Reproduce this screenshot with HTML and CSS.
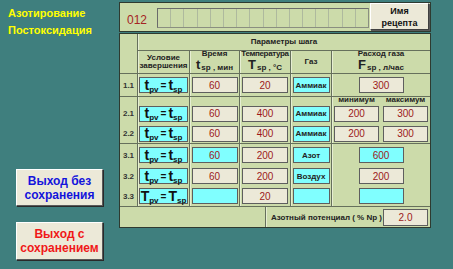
FILE: index.html
```html
<!DOCTYPE html>
<html lang="ru">
<head>
    <meta charset="UTF-8">
    <title>Параметры шага</title>
    <link rel="stylesheet" href="styles.css">
</head>
<body>
<div class="screen">
    <div class="side">
        <div class="mode">Азотирование</div>
        <div class="mode">Постоксидация</div>
        <div class="exits">
            <button class="exit exit-nosave">Выход без<br>сохранения</button>
            <button class="exit exit-save">Выход с<br>сохранением</button>
        </div>
    </div>

    <div class="main">
        <div class="recipe-bar">
            <span class="recipe-no">012</span>
            <div class="recipe-name">
                <span></span><span></span><span></span><span></span>
                <span></span><span></span><span></span><span></span>
                <span></span><span></span><span></span><span></span>
                <span></span><span></span><span></span><span></span>
            </div>
            <button class="name-btn">Имя<br>рецепта</button>
        </div>

        <div class="steps">
            <div class="grid">
                <!-- шапка -->
                <div class="cell first end head-num"></div>
                <div class="cell end wide-all title">Параметры шага</div>

                <div class="cell end hd">Условие<br>завершения</div>
                <div class="cell end hd">Время<span class="sym">t<small>sp , мин</small></span></div>
                <div class="cell end hd"><span class="tight">Температура</span><span class="sym">T<small>sp , °C</small></span></div>
                <div class="cell end hd">Газ</div>
                <div class="cell end hd wide">Расход газа<span class="sym">F<small>sp , л/час</small></span></div>

                <!-- 1.1 -->
                <div class="cell first end num">1.1</div>
                <div class="cell end"><div class="fld cyan cond"><span class="eq">t<sub>pv</sub><i>=</i>t<sub>sp</sub></span></div></div>
                <div class="cell end"><div class="fld">60</div></div>
                <div class="cell end"><div class="fld">20</div></div>
                <div class="cell end"><div class="fld cyan gas">Аммиак</div></div>
                <div class="cell end wide"><div class="fld flow">300</div></div>

                <!-- 2.x -->
                <div class="cell first"></div>
                <div class="cell"></div>
                <div class="cell"></div>
                <div class="cell"></div>
                <div class="cell"></div>
                <div class="cell mm">минимум</div>
                <div class="cell nol mm">максимум</div>

                <div class="cell first num">2.1</div>
                <div class="cell"><div class="fld cyan cond"><span class="eq">t<sub>pv</sub><i>=</i>t<sub>sp</sub></span></div></div>
                <div class="cell"><div class="fld">60</div></div>
                <div class="cell"><div class="fld">400</div></div>
                <div class="cell"><div class="fld cyan gas">Аммиак</div></div>
                <div class="cell"><div class="fld flow">200</div></div>
                <div class="cell nol"><div class="fld flow">300</div></div>

                <div class="cell first end num">2.2</div>
                <div class="cell end"><div class="fld cyan cond"><span class="eq">t<sub>pv</sub><i>=</i>t<sub>sp</sub></span></div></div>
                <div class="cell end"><div class="fld">60</div></div>
                <div class="cell end"><div class="fld">400</div></div>
                <div class="cell end"><div class="fld cyan gas">Аммиак</div></div>
                <div class="cell end"><div class="fld flow">200</div></div>
                <div class="cell end nol"><div class="fld flow">300</div></div>

                <!-- 3.x -->
                <div class="cell first num">3.1</div>
                <div class="cell"><div class="fld cyan cond"><span class="eq">t<sub>pv</sub><i>=</i>t<sub>sp</sub></span></div></div>
                <div class="cell"><div class="fld cyan">60</div></div>
                <div class="cell"><div class="fld">200</div></div>
                <div class="cell"><div class="fld cyan gas">Азот</div></div>
                <div class="cell wide"><div class="fld cyan flow">600</div></div>

                <div class="cell first num">3.2</div>
                <div class="cell"><div class="fld cyan cond"><span class="eq">t<sub>pv</sub><i>=</i>t<sub>sp</sub></span></div></div>
                <div class="cell"><div class="fld">60</div></div>
                <div class="cell"><div class="fld">200</div></div>
                <div class="cell"><div class="fld cyan gas">Воздух</div></div>
                <div class="cell wide"><div class="fld flow">200</div></div>

                <div class="cell first end num">3.3</div>
                <div class="cell end"><div class="fld cyan cond"><span class="eq">T<sub>pv</sub><i>=</i>T<sub>sp</sub></span></div></div>
                <div class="cell end"><div class="fld cyan"></div></div>
                <div class="cell end"><div class="fld">20</div></div>
                <div class="cell end"><div class="fld cyan gas"></div></div>
                <div class="cell end wide"><div class="fld cyan flow"></div></div>
            </div>

            <div class="potential">
                <div class="pot-blank"></div>
                <div class="pot-main">
                    <span class="pot-label">Азотный потенциал ( % Np )</span>
                    <div class="fld flow pot-val">2.0</div>
                </div>
            </div>
        </div>
    </div>
</div>
</body>
</html>
```

FILE: styles.css
```css
body {
    margin: 0;
    background-color: #3f7f7e;
    font-family: "Liberation Sans", Arial, sans-serif;
}
.screen {
    display: grid;
    grid-template-columns: 119px 312px;
    width: 453px;
    height: 269px;
}

/* левая колонка */
.side {
    padding: 5px 0 0 8px;
}
.mode {
    color: #ffff00;
    font-weight: bold;
    font-size: 11px;
    line-height: 17px;
}
.exits {
    margin: 130px 0 0 8px;
}
.exit {
    display: block;
    width: 87px;
    height: 37px;
    padding: 0;
    background-color: #ece9d8;
    border: 1px solid;
    border-color: #ffffff #5a5a5a #5a5a5a #ffffff;
    box-shadow: 1px 1px 0 #2a2a2a;
    font-family: "Liberation Sans", Arial, sans-serif;
    font-weight: bold;
    font-size: 12px;
    line-height: 14px;
}
.exit-nosave { color: #1414dc; }
.exit-save { color: #f01818; margin-top: 16px; height: 38px; }

/* правая часть */
.main {
    padding-top: 2px;
}
.recipe-bar {
    display: flex;
    align-items: flex-start;
    height: 30px;
    box-sizing: border-box;
    background-color: #ccdbaa;
    border: 1px solid #2e3a30;
}
.recipe-no {
    width: 30px;
    margin: 10px 0 0 7px;
    color: #a52424;
    font-size: 12px;
    line-height: 14px;
}
.recipe-name {
    display: flex;
    width: 212px;
    height: 20px;
    margin-top: 5px;
    box-sizing: border-box;
    border: 1px solid;
    border-color: #6b6b6b #8a8f80 #8a8f80 #6b6b6b;
}
.recipe-name span {
    flex: 1;
    border-right: 1px solid #aeb99e;
}
.recipe-name span:last-child {
    border-right: none;
}
.name-btn {
    width: 59px;
    height: 27px;
    margin: 0 0 0 1px;
    padding: 0;
    background-color: #ece9d8;
    border: 1px solid;
    border-color: #ffffff #404040 #404040 #ffffff;
    box-shadow: 1px 1px 0 #5a5a5a;
    font-family: "Liberation Sans", Arial, sans-serif;
    font-weight: bold;
    font-size: 9px;
    line-height: 12px;
    color: #111;
}

.steps {
    margin-top: 1px;
    height: 195px;
    box-sizing: border-box;
    background-color: #ccdbaa;
    border: 1px solid #2e3a30;
}
.grid {
    display: grid;
    grid-template-columns: 17px 52px 50px 51px 41px 50px 49px;
    grid-template-rows: 17px 23px 23px 6px 21px 20px 22px 20px 21px;
}
.cell {
    display: flex;
    align-items: center;
    justify-content: center;
    box-sizing: border-box;
    border-left: 1px solid #66705c;
    box-shadow: inset 1px 0 0 #e6eed2;
    font-size: 8px;
    font-weight: bold;
    color: #222;
}
.cell.first, .cell.nol {
    border-left: none;
    box-shadow: none;
}
.cell.end { border-bottom: 1px solid #66705c; }
.head-num { grid-row: span 2; }
.wide-all { grid-column: span 6; }
.wide { grid-column: span 2; }

.title { line-height: 10px; }
.hd {
    flex-direction: column;
    text-align: center;
    line-height: 8px;
}
.tight {
    white-space: nowrap;
    letter-spacing: -0.35px;
}
.sym {
    font-size: 13px;
    line-height: 12px;
    margin-top: 1px;
    white-space: nowrap;
}
.sym small {
    font-size: 8px;
    margin-left: 1px;
    vertical-align: -1px;
}
.num { color: #333; }
.mm {
    line-height: 6px;
    overflow: visible;
}

/* поля */
.fld {
    display: flex;
    align-items: center;
    justify-content: center;
    width: 46px;
    height: 16px;
    box-sizing: border-box;
    background-color: #ece9d8;
    border: 1px solid #5e5e5e;
    color: #9c1a1a;
    font-size: 10px;
    font-weight: normal;
}
.fld.cyan { background-color: #80ffff; }
.fld.cond { width: 49px; }
.fld.gas { width: 37px; color: #222; font-weight: bold; font-size: 8px; }
.fld.flow { width: 45px; }
.eq {
    color: #111;
    font-weight: bold;
    font-size: 14px;
    line-height: 14px;
    white-space: nowrap;
}
.eq sub {
    font-size: 8px;
    vertical-align: -2px;
    line-height: 0;
}
.eq i {
    font-style: normal;
    font-size: 10px;
    margin: 0 2px;
    vertical-align: 1px;
}

.potential {
    display: flex;
    height: 20px;
}
.pot-blank {
    width: 145px;
    border-right: 1px solid #66705c;
}
.pot-main {
    flex: 1;
    display: flex;
    align-items: center;
    justify-content: flex-end;
    gap: 1px;
    padding-right: 2px;
    box-shadow: inset 1px 0 0 #e6eed2;
}
.pot-label {
    font-size: 8px;
    font-weight: bold;
    color: #222;
}
.pot-val { height: 17px; }
```
